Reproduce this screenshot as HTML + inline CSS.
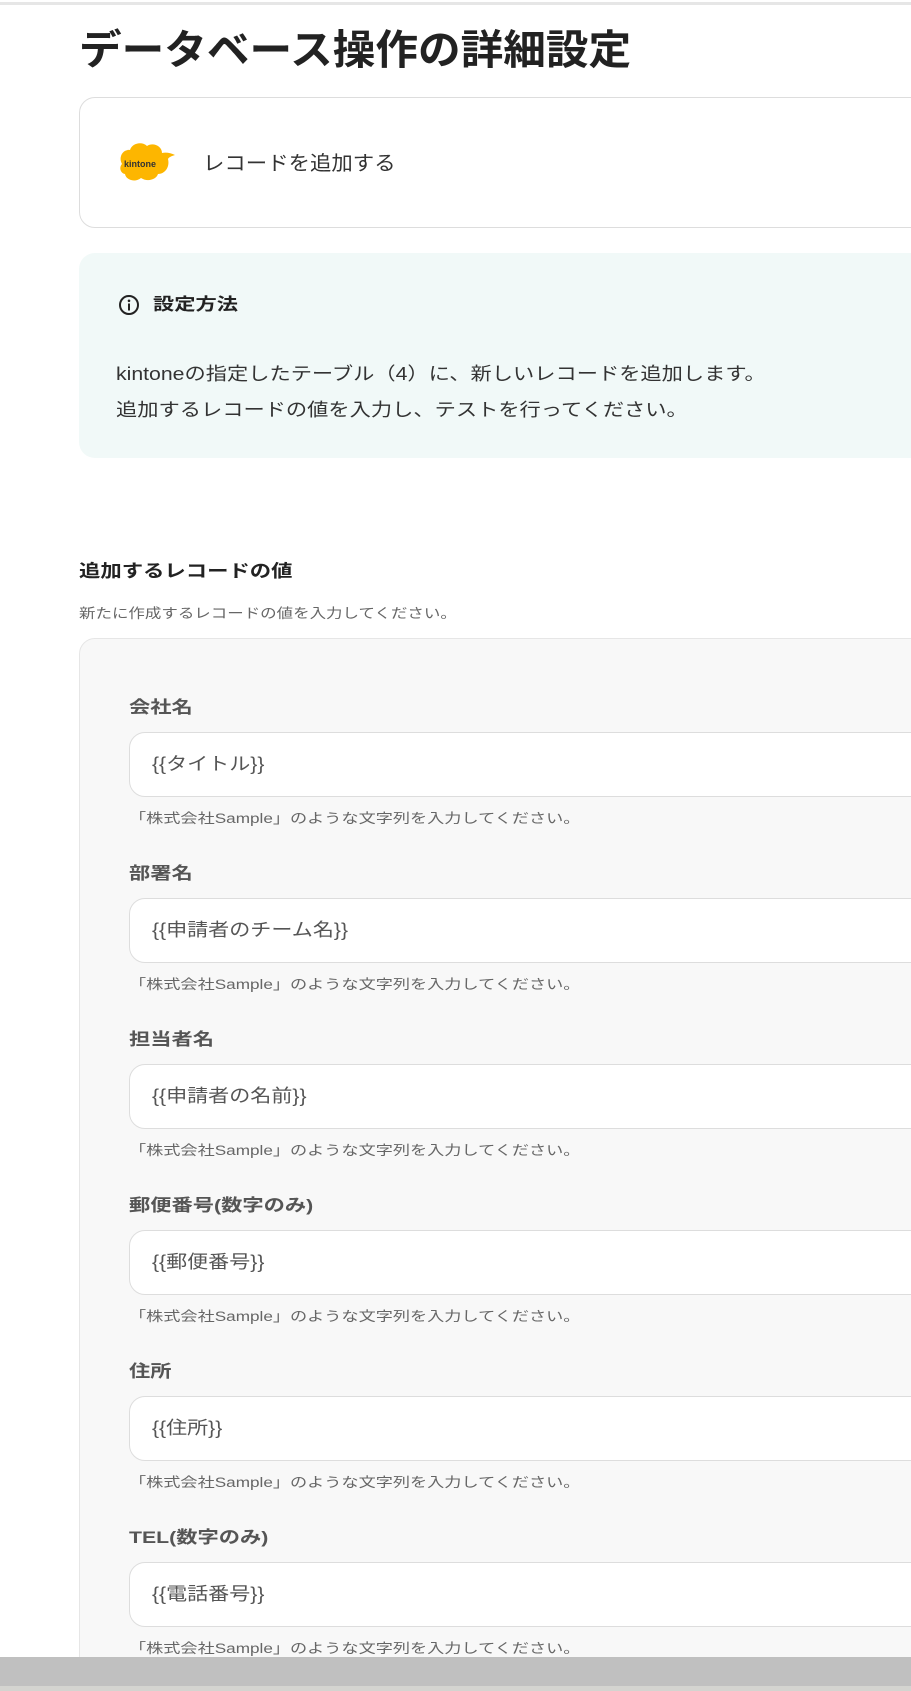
<!DOCTYPE html>
<html><head><meta charset="utf-8"><style>
*{margin:0;padding:0;box-sizing:border-box}
html,body{width:911px;height:1691px;overflow:hidden}
body{background:#fff;font-family:"Liberation Sans","Noto Sans CJK JP",sans-serif;position:relative;color:#333}
.a{position:absolute;white-space:nowrap;transform-origin:0 50%}
.lbl{font-size:17px;font-weight:bold;color:#555;transform:scaleX(1.25)}
.inp{position:absolute;left:129px;width:800px;height:65px;background:#fff;border:1.5px solid #ddd;border-radius:16px}
.inp span{position:absolute;left:22px;top:0;line-height:62px;font-size:18px;color:#555;transform:scaleX(1.17);transform-origin:0 50%;white-space:nowrap}
.hint{font-size:13.5px;color:#666;transform:scaleX(1.27)}
</style></head><body>
<div class="a" style="left:0;top:2px;width:911px;height:3px;background:#e6e6e6"></div>
<div class="a" style="left:79px;top:26px;font-size:41px;font-weight:bold;color:#222;line-height:48px;transform:scaleX(1.04)">データベース操作の詳細設定</div>
<div class="a" style="left:79px;top:97px;width:860px;height:131px;border:1.5px solid #ddd;border-radius:16px"></div>
<svg class="a" style="left:116px;top:138px" width="64" height="52" viewBox="0 0 64 52"><path d="M6 26c-4-7 1-15 8-14 2-7 12-9 17-4 6-4 15 0 15 7 4-1 9 0 13 2-3 1-6 2-7 4 2 8-3 15-10 15-2 6-11 8-17 4-6 5-15 2-16-4-5-1-6-7-3-10z" fill="#fdb600"/><text x="8" y="29" font-size="9" font-weight="bold" fill="#333" font-family="Liberation Sans,sans-serif">kintone</text></svg>
<div class="a" style="left:203px;top:151px;font-size:20px;color:#333;line-height:26px;transform:scaleX(1.07)">レコードを追加する</div>
<div class="a" style="left:79px;top:253px;width:860px;height:205px;background:#f1f9f8;border-radius:16px"></div>
<svg class="a" style="left:118px;top:294px" width="22" height="22" viewBox="0 0 22 22"><circle cx="11" cy="11" r="9" fill="none" stroke="#222" stroke-width="2"/><circle cx="11" cy="6.8" r="1.3" fill="#222"/><rect x="10" y="9.5" width="2" height="7" fill="#222"/></svg>
<div class="a" style="left:153px;top:294px;font-size:17px;font-weight:bold;color:#222;line-height:22px;transform:scaleX(1.25)">設定方法</div>
<div class="a" style="left:116px;top:356px;font-size:18px;color:#333;line-height:36px;transform:scaleX(1.18);transform-origin:0 0">kintoneの指定したテーブル（4）に、新しいレコードを追加します。<br>追加するレコードの値を入力し、テストを行ってください。</div>
<div class="a" style="left:79px;top:560px;font-size:17.5px;font-weight:bold;color:#222;line-height:22px;transform:scaleX(1.22)">追加するレコードの値</div>
<div class="a" style="left:79px;top:606px;line-height:16px;font-size:13.5px;color:#666;transform:scaleX(1.22)">新たに作成するレコードの値を入力してください。</div>
<div class="a" style="left:79px;top:638px;width:860px;height:1100px;background:#f8f8f8;border:1.5px solid #e6e6e6;border-radius:16px"></div>

<div class="a lbl" style="left:129px;top:693px">会社名</div>
<div class="inp" style="top:732px"><span>{{タイトル}}</span></div>
<div class="a hint" style="left:129px;top:807px">「株式会社Sample」のような文字列を入力してください。</div>

<div class="a lbl" style="left:129px;top:859px">部署名</div>
<div class="inp" style="top:898px"><span>{{申請者のチーム名}}</span></div>
<div class="a hint" style="left:129px;top:973px">「株式会社Sample」のような文字列を入力してください。</div>

<div class="a lbl" style="left:129px;top:1025px">担当者名</div>
<div class="inp" style="top:1064px"><span>{{申請者の名前}}</span></div>
<div class="a hint" style="left:129px;top:1139px">「株式会社Sample」のような文字列を入力してください。</div>

<div class="a lbl" style="left:129px;top:1191px">郵便番号(数字のみ)</div>
<div class="inp" style="top:1230px"><span>{{郵便番号}}</span></div>
<div class="a hint" style="left:129px;top:1305px">「株式会社Sample」のような文字列を入力してください。</div>

<div class="a lbl" style="left:129px;top:1357px">住所</div>
<div class="inp" style="top:1396px"><span>{{住所}}</span></div>
<div class="a hint" style="left:129px;top:1471px">「株式会社Sample」のような文字列を入力してください。</div>

<div class="a lbl" style="left:129px;top:1523px">TEL(数字のみ)</div>
<div class="inp" style="top:1562px"><span>{{電話番号}}</span></div>
<div class="a hint" style="left:129px;top:1637px">「株式会社Sample」のような文字列を入力してください。</div>

<div class="a" style="left:0;top:1657px;width:911px;height:34px;background:#c0c0c0"></div>
<div class="a" style="left:0;top:1686px;width:911px;height:5px;background:#d4d4d0"></div>
</body></html>
